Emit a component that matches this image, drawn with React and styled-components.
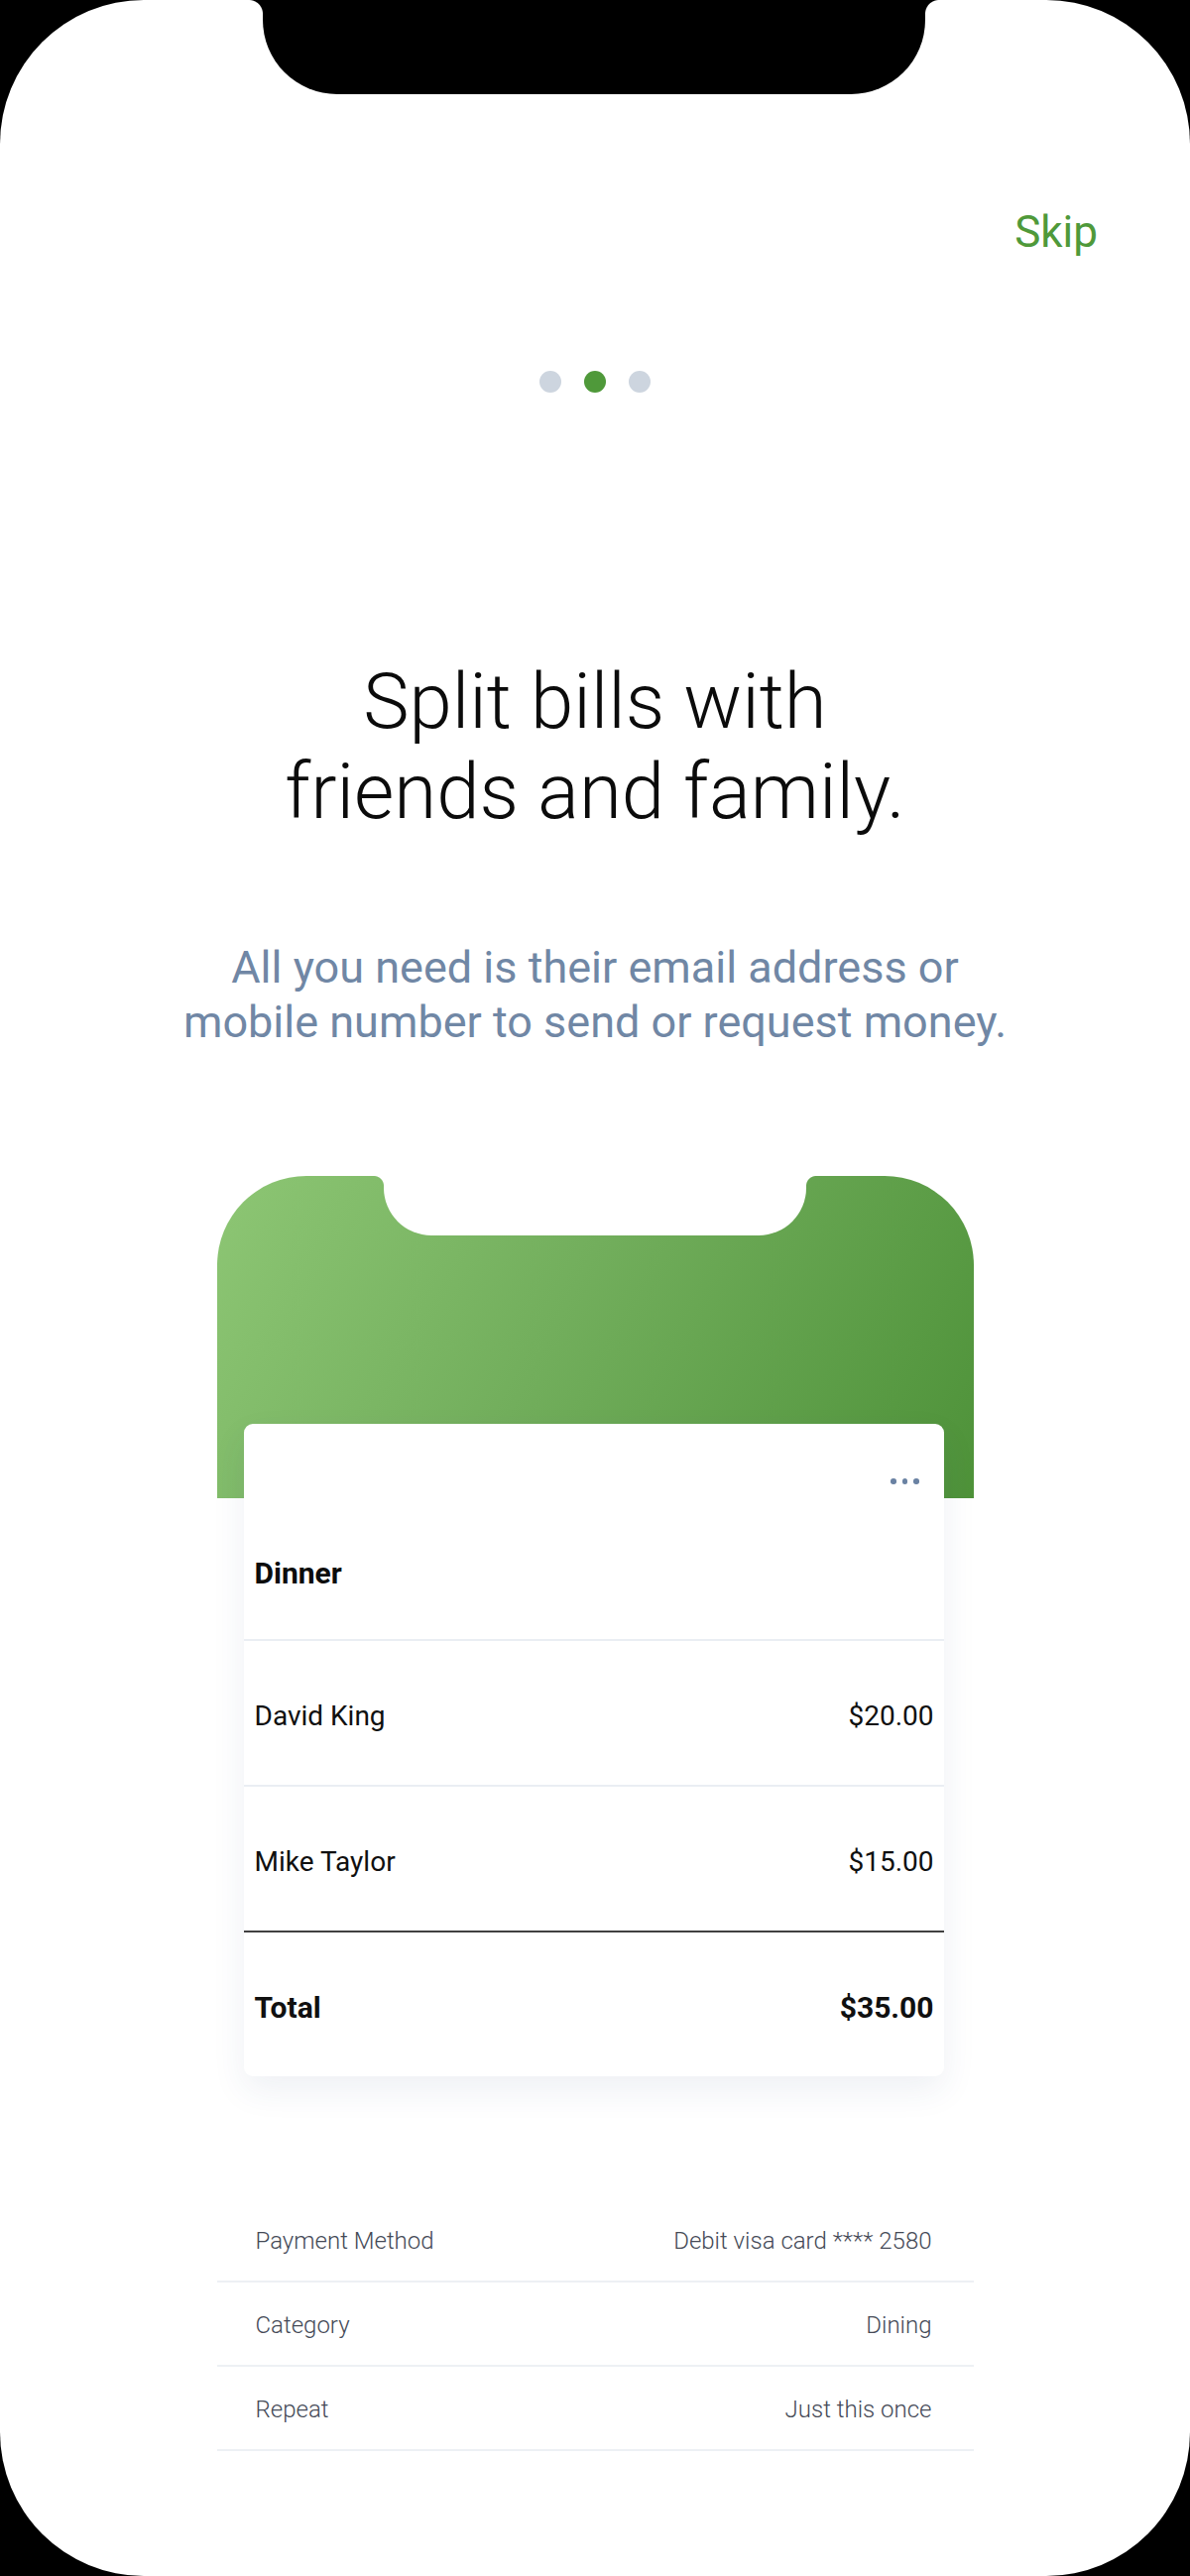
import styled, { createGlobalStyle } from 'styled-components';

const GlobalStyle = createGlobalStyle`
  html, body {
    margin: 0;
    padding: 0;
    background: #000;
  }
  body {
    font-family: Roboto, 'Liberation Sans', sans-serif;
    -webkit-font-smoothing: antialiased;
  }
`;

const bill = [
  { name: 'David King', amount: '$20.00' },
  { name: 'Mike Taylor', amount: '$15.00' },
];

const details = [
  { label: 'Payment Method', value: 'Debit visa card **** 2580' },
  { label: 'Category', value: 'Dining' },
  { label: 'Repeat', value: 'Just this once' },
];

function App() {
  return (
    <>
      <GlobalStyle />
      <Screen>
        <Notch />

        <TopBar>
          <SkipButton>Skip</SkipButton>
        </TopBar>

        <Pager>
          <PagerDot />
          <PagerDot active />
          <PagerDot />
        </Pager>

        <Title>
          Split bills with
          <br />
          friends and family.
        </Title>

        <Subtitle>
          All you need is their email address or
          <br />
          mobile number to send or request money.
        </Subtitle>

        <Preview>
          <PhoneHeader>
            <PhoneNotch />
          </PhoneHeader>

          <BillCard>
            <BillHead>
              <MoreButton>
                <MoreDot />
                <MoreDot />
                <MoreDot />
              </MoreButton>
              <BillTitle>Dinner</BillTitle>
            </BillHead>

            {bill.map((item, i) => (
              <BillRow key={item.name} strong={i === bill.length - 1}>
                <span>{item.name}</span>
                <span>{item.amount}</span>
              </BillRow>
            ))}

            <TotalRow>
              <span>Total</span>
              <span>$35.00</span>
            </TotalRow>
          </BillCard>

          <DetailList>
            {details.map((d) => (
              <DetailRow key={d.label}>
                <span>{d.label}</span>
                <span>{d.value}</span>
              </DetailRow>
            ))}
          </DetailList>
        </Preview>
      </Screen>
    </>
  );
}

export default App;

const Screen = styled.div`
  position: relative;
  box-sizing: border-box;
  width: 1200px;
  height: 2598px;
  background: #fff;
  border-radius: 145px;
  overflow: hidden;
  display: flex;
  flex-direction: column;
  align-items: center;
`;

// device notch, sits over the screen
const Notch = styled.div`
  position: absolute;
  top: 0;
  left: 265px;
  width: 668px;
  height: 95px;
  background: #000;
  border-radius: 0 0 75px 75px;

  &::before,
  &::after {
    content: '';
    position: absolute;
    top: 0;
    width: 14px;
    height: 14px;
  }
  &::before {
    left: -14px;
    background: radial-gradient(circle at 0 100%, transparent 13.5px, #000 14.5px);
  }
  &::after {
    right: -14px;
    background: radial-gradient(circle at 100% 100%, transparent 13.5px, #000 14.5px);
  }
`;

const TopBar = styled.div`
  align-self: stretch;
  display: flex;
  justify-content: flex-end;
  padding: 208px 93px 0 0;
`;

const SkipButton = styled.button`
  border: 0;
  background: none;
  padding: 0;
  font-family: inherit;
  font-size: 44px;
  line-height: 52px;
  font-weight: 400;
  color: #4f993a;
  cursor: pointer;
`;

const Pager = styled.div`
  display: flex;
  gap: 23px;
  margin-top: 114px;
`;

const PagerDot = styled.span`
  width: 22px;
  height: 22px;
  border-radius: 50%;
  background: ${(p) => (p.active ? '#4f993a' : '#cdd5df')};
`;

const Title = styled.h1`
  margin: 266px 0 0;
  font-size: 78px;
  line-height: 91px;
  font-weight: 300;
  color: #0b0b0b;
  text-align: center;
`;

const Subtitle = styled.p`
  margin: 104px 0 0;
  font-size: 45px;
  line-height: 55px;
  font-weight: 400;
  color: #7087a5;
  text-align: center;
  white-space: nowrap;
`;

const Preview = styled.div`
  width: 763px;
  margin-top: 128px;
  display: flex;
  flex-direction: column;
`;

const PhoneHeader = styled.div`
  height: 325px;
  border-radius: 90px 90px 0 0;
  background: linear-gradient(118deg, #8dc674 0%, #72ae5c 45%, #4e9239 100%);
  display: flex;
  justify-content: center;
  align-items: flex-start;
`;

const PhoneNotch = styled.div`
  position: relative;
  width: 426px;
  height: 60px;
  background: #fff;
  border-radius: 0 0 48px 48px;

  &::before,
  &::after {
    content: '';
    position: absolute;
    top: 0;
    width: 10px;
    height: 10px;
  }
  &::before {
    left: -10px;
    background: radial-gradient(circle at 0 100%, transparent 9.5px, #fff 10.5px);
  }
  &::after {
    right: -10px;
    background: radial-gradient(circle at 100% 100%, transparent 9.5px, #fff 10.5px);
  }
`;

const BillCard = styled.div`
  position: relative;
  margin: -75px 30px 0 27px;
  background: #fff;
  border-radius: 9px;
  box-shadow: 0 14px 34px rgba(40, 60, 110, 0.08);
`;

const BillHead = styled.div`
  box-sizing: border-box;
  height: 219px;
  padding: 53px 25px 0 11px;
  border-bottom: 2px solid #eaeef3;
  display: flex;
  flex-direction: column;
`;

const MoreButton = styled.div`
  align-self: flex-end;
  display: flex;
  gap: 6px;
  height: 10px;
  align-items: center;
`;

const MoreDot = styled.span`
  width: 5.5px;
  height: 5.5px;
  border-radius: 50%;
  background: #6a82a3;
`;

const BillTitle = styled.div`
  margin-top: 71px;
  font-size: 30px;
  line-height: 34px;
  font-weight: 700;
  color: #0c0c0c;
`;

const BillRow = styled.div`
  box-sizing: border-box;
  height: 147px;
  padding: 6px 10px 0 11px;
  display: flex;
  align-items: center;
  justify-content: space-between;
  font-size: 28px;
  font-weight: 400;
  color: #101010;
  border-bottom: ${(p) => (p.strong ? '2px solid #404040' : '2px solid #eaeef3')};
`;

const TotalRow = styled(BillRow)`
  height: 145px;
  font-size: 30px;
  font-weight: 700;
  border-bottom: 0;
`;

const DetailList = styled.div`
  margin-top: 123px;
  display: flex;
  flex-direction: column;
`;

const DetailRow = styled.div`
  box-sizing: border-box;
  height: 85px;
  padding: 3px 42px 0 39px;
  display: flex;
  align-items: center;
  justify-content: space-between;
  border-bottom: 2px solid #edf0f4;
  font-size: 24px;
  font-weight: 300;
  color: #454a57;
`;
